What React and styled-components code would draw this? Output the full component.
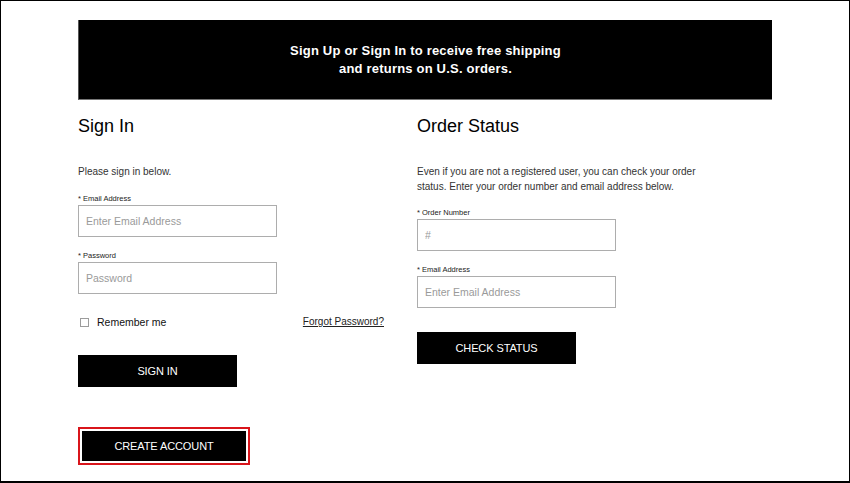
import React from "react";
import styled, { createGlobalStyle } from "styled-components";

const Global = createGlobalStyle`
  html, body { margin: 0; padding: 0; background: #fff; }
  body { font-family: "Liberation Sans", Arial, sans-serif; color: #111; }
  * { box-sizing: border-box; }
`;

const Frame = styled.div`
  width: 850px;
  height: 483px;
  border: 1px solid #000;
  border-bottom-width: 2px;
  padding: 19px 0 0 77px;
  overflow: hidden;
`;

const Banner = styled.div`
  width: 694px;
  height: 80px;
  background: #000;
  border-left: 1px solid #555;
  border-bottom: 1px solid #777;
  color: #fff;
  display: flex;
  align-items: center;
  justify-content: center;
  text-align: center;
  font-weight: 700;
  font-size: 13px;
  line-height: 18px;
  letter-spacing: 0.2px;
`;

const Columns = styled.div`
  display: grid;
  grid-template-columns: 339px 340px;
  width: 694px;
  padding-top: 14px;
`;

const Column = styled.section`
  display: flex;
  flex-direction: column;
  align-items: flex-start;
`;

const Heading = styled.h2`
  margin: 0;
  font-size: 18px;
  font-weight: 400;
  line-height: 24px;
  color: #000;
`;

const Intro = styled.p`
  margin: 26px 0 0;
  font-size: 10px;
  line-height: 15px;
  color: #333;
`;

const Label = styled.label`
  display: block;
  margin-top: ${(p) => p.$top || 14}px;
  margin-bottom: 1px;
  font-size: 7.5px;
  line-height: 10px;
  color: #222;
`;

const Input = styled.input`
  width: 199px;
  height: 32px;
  border: 1px solid #adadad;
  padding: 0 7px;
  font-family: "Liberation Sans", Arial, sans-serif;
  font-size: 10.5px;
  color: #333;
  outline: none;
  background: #fff;
  &::placeholder { color: #9a9a9a; }
`;

const OptionsRow = styled.div`
  width: 306px;
  height: 16px;
  margin-top: 20px;
  display: flex;
  align-items: center;
  justify-content: space-between;
`;

const CheckLabel = styled.label`
  display: flex;
  align-items: center;
  gap: 8px;
  padding-left: 2px;
  font-size: 10.5px;
  color: #111;
`;

const Box = styled.span`
  width: 9px;
  height: 9px;
  border: 1px solid #9c9c9c;
  background: #fff;
`;

const Forgot = styled.a`
  font-size: 10px;
  color: #222;
  text-decoration: underline;
  margin-top: -1px;
`;

const Button = styled.button`
  width: ${(p) => p.$w || 159}px;
  height: ${(p) => p.$h || 32}px;
  margin-top: ${(p) => p.$top || 0}px;
  border: none;
  background: #000;
  color: #fff;
  font-family: "Liberation Sans", Arial, sans-serif;
  font-size: 11px;
  letter-spacing: -0.1px;
  cursor: pointer;
`;

const Highlight = styled.div`
  margin-top: 40px;
  border: 2px solid #d9151b;
  padding: 2px;
  background: #fff;
  display: flex;
`;

export default function App() {
  return (
    <>
      <Global />
      <Frame>
        <Banner>
          Sign Up or Sign In to receive free shipping
          <br />
          and returns on U.S. orders.
        </Banner>
        <Columns>
          <Column>
            <Heading>Sign In</Heading>
            <Intro>Please sign in below.</Intro>
            <Label $top={15}>* Email Address</Label>
            <Input placeholder="Enter Email Address" />
            <Label>* Password</Label>
            <Input type="password" placeholder="Password" />
            <OptionsRow>
              <CheckLabel>
                <Box />
                Remember me
              </CheckLabel>
              <Forgot href="#">Forgot Password?</Forgot>
            </OptionsRow>
            <Button $top={25}>SIGN IN</Button>
            <Highlight>
              <Button $w={164} $h={30}>CREATE ACCOUNT</Button>
            </Highlight>
          </Column>
          <Column>
            <Heading>Order Status</Heading>
            <Intro>
              Even if you are not a registered user, you can check your order
              <br />
              status. Enter your order number and email address below.
            </Intro>
            <Label>* Order Number</Label>
            <Input placeholder="#" />
            <Label>* Email Address</Label>
            <Input placeholder="Enter Email Address" />
            <Button $top={24}>CHECK STATUS</Button>
          </Column>
        </Columns>
      </Frame>
    </>
  );
}
